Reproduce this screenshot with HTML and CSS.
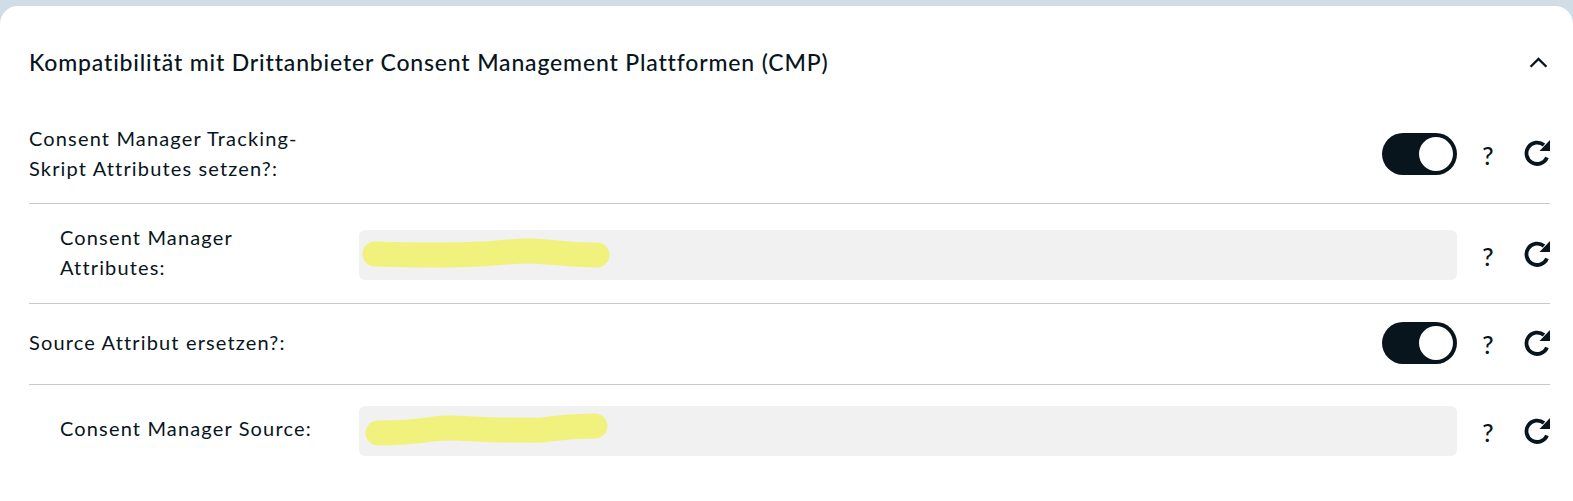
FILE: index.html
```html
<!DOCTYPE html>
<html lang="de">
<head>
<meta charset="utf-8">
<title>CMP</title>
<link rel="stylesheet" href="styles.css">
</head>
<body>
<section class="card">
  <header class="head">
    <h2 class="title">Kompatibilität mit Drittanbieter Consent Management Plattformen (CMP)</h2>
    <svg class="chevron" viewBox="0 0 18 12"><path d="M1.5 10 9 2.5 16.5 10"/></svg>
  </header>
  <div class="row row-a">
    <label class="label">Consent Manager Tracking-<br>Skript Attributes setzen?:</label>
    <div class="control"><span class="toggle"><span class="knob"></span></span></div>
    <div class="actions">
      <span class="help">?</span>
      <svg class="reset" viewBox="0 0 26 26"><path class="arc" d="M23 17.5A10.7 10.7 0 1 1 20 5"/><path class="tip" d="M26 0v11H15.5z"/></svg>
    </div>
  </div>
  <div class="row row-b">
    <label class="label sub">Consent Manager<br>Attributes:</label>
    <div class="control">
      <div class="field">
        <svg class="scribble" viewBox="0 0 1098 50"><path d="M16 24C45 25 85 26 121 24S150 21 170 21 205 25 238 25"/></svg>
      </div>
    </div>
    <div class="actions">
      <span class="help">?</span>
      <svg class="reset" viewBox="0 0 26 26"><path class="arc" d="M23 17.5A10.7 10.7 0 1 1 20 5"/><path class="tip" d="M26 0v11H15.5z"/></svg>
    </div>
  </div>
  <div class="row row-c">
    <label class="label">Source Attribut ersetzen?:</label>
    <div class="control"><span class="toggle"><span class="knob"></span></span></div>
    <div class="actions">
      <span class="help">?</span>
      <svg class="reset" viewBox="0 0 26 26"><path class="arc" d="M23 17.5A10.7 10.7 0 1 1 20 5"/><path class="tip" d="M26 0v11H15.5z"/></svg>
    </div>
  </div>
  <div class="row row-d">
    <label class="label sub">Consent Manager Source:</label>
    <div class="control">
      <div class="field">
        <svg class="scribble" viewBox="0 0 1098 50"><path d="M19 27C40 27 55 26 75 23S110 24 150 24 175 25 190 23 215 20 236 20"/></svg>
      </div>
    </div>
    <div class="actions">
      <span class="help">?</span>
      <svg class="reset" viewBox="0 0 26 26"><path class="arc" d="M23 17.5A10.7 10.7 0 1 1 20 5"/><path class="tip" d="M26 0v11H15.5z"/></svg>
    </div>
  </div>
</section>
</body>
</html>
```
FILE: styles.css
```css
html, body { margin: 0; height: 100%; }
body {
  background: #d0dde7;
  font-family: "Lato", "Noto Sans", sans-serif;
  color: #08151c;
  overflow: hidden;
}
.card {
  margin-top: 6px;
  height: 495px;
  box-sizing: border-box;
  background: #fff;
  border-radius: 18px 18px 0 0;
  padding: 0 23px 0 29px;
}
.head {
  height: 112px;
  display: flex;
  align-items: center;
  justify-content: space-between;
}
.title {
  margin: 0;
  font-size: 23px;
  font-weight: 500;
  letter-spacing: 0.83px;
}
.chevron {
  width: 19px;
  height: 13px;
  margin-right: 2px;
  fill: none;
  stroke: #08151c;
  stroke-width: 2.2;
}
.row {
  display: flex;
  align-items: center;
  box-sizing: border-box;
  border-bottom: 1px solid #c9c9c9;
}
.row-a { height: 86px; padding-bottom: 14px; }
.row-b { height: 100px; padding-top: 2px; }
.row-c { height: 81px; padding-bottom: 2px; }
.row-d { height: 96px; padding-bottom: 4px; border-bottom: 0; }
.label {
  width: 330px;
  flex: none;
  font-size: 20px;
  line-height: 30px;
  letter-spacing: 1.15px;
  margin-bottom: 2px;
}
.label.sub {
  width: 299px;
  padding-left: 31px;
  margin-bottom: 6px;
}
.control {
  flex: 1;
  display: flex;
  justify-content: flex-end;
}
.toggle {
  display: flex;
  justify-content: flex-end;
  align-items: center;
  width: 75px;
  height: 42px;
  box-sizing: border-box;
  padding-right: 4px;
  border-radius: 21px;
  background: #08151c;
}
.knob {
  width: 34px;
  height: 34px;
  border-radius: 50%;
  background: #fff;
}
.field {
  position: relative;
  flex: 1;
  height: 50px;
  border-radius: 6px;
  background: #f1f1f1;
}
.scribble {
  position: absolute;
  inset: 0;
  width: 100%;
  height: 100%;
  fill: none;
  stroke: #f1f27e;
  stroke-width: 25;
  stroke-linecap: round;
  stroke-linejoin: round;
}
.actions {
  width: 93px;
  flex: none;
  display: flex;
  align-items: center;
  justify-content: flex-end;
}
.help {
  width: 14px;
  margin-right: 29px;
  font-size: 25px;
  font-weight: 500;
  line-height: 1;
  text-align: center;
  padding-top: 3px;
}
.reset {
  width: 26px;
  height: 26px;
  margin-bottom: 1px;
}
.arc {
  fill: none;
  stroke: #08151c;
  stroke-width: 3.8;
}
.tip { fill: #08151c; }
```
